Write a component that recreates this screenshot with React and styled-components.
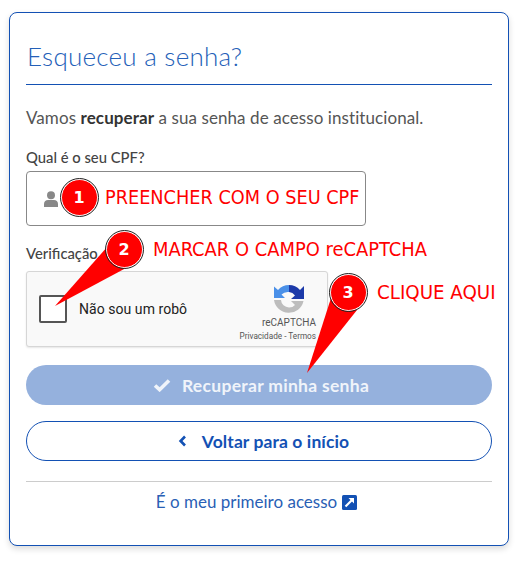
import React from "react";
import styled, { createGlobalStyle } from "styled-components";

const Global = createGlobalStyle`
  html, body { margin: 0; padding: 0; background: #fff; }
  body { font-family: "Lato", "Open Sans", sans-serif; color: #333; }
`;
const Page = styled.div`
  position: relative;
  width: 520px;
  height: 561px;
  padding: 12px 11px 0 9px;
  box-sizing: border-box;
  overflow: hidden;
`;
const Card = styled.main`
  box-sizing: border-box;
  height: 534px;
  border: 1px solid #1351b4;
  border-radius: 8px;
  padding: 26px 16px 0;
  background: #fff;
  box-shadow: 0 3px 6px rgba(0,0,0,.14);
  display: flex;
  flex-direction: column;
`;
const Title = styled.h1`
  margin: 0;
  height: 45px;
  line-height: 34px;
  padding-left: 1px;
  font-size: 26px;
  font-weight: 300;
  letter-spacing: .25px;
  color: #2460b8;
  border-bottom: 1px solid #1351b4;
`;
const Intro = styled.p`
  margin: 21px 0 0;
  font-size: 17px;
  line-height: 24px;
  font-weight: 400;
  color: #555;
  letter-spacing: .08px;
  b { font-weight: 700; color: #333; }
`;
const Label = styled.label`
  display: block;
  font-size: 14.8px;
  font-weight: 500;
  line-height: 20px;
  color: #444;
  margin-top: ${p => p.$top}px;
`;
const Field = styled.div`
  box-sizing: border-box;
  width: 340px;
  height: 55px;
  margin-top: 4px;
  border: 1px solid #888;
  border-radius: 4px;
  display: flex;
  align-items: center;
  padding-left: 16px;
`;
const Captcha = styled.div`
  box-sizing: border-box;
  width: 302px;
  height: 76px;
  margin-top: 8px;
  border: 1px solid #d6d6d6;
  border-radius: 3px;
  background: #f9f9f9;
  box-shadow: 0 1px 2px rgba(0,0,0,.1);
  display: flex;
  align-items: center;
  padding-left: 12px;
  position: relative;
`;
const Box = styled.span`
  box-sizing: border-box;
  width: 28px;
  height: 28px;
  border: 2px solid #555;
  border-radius: 2px;
  background: #fff;
`;
const Robot = styled.span`
  margin-left: 12px;
  font-family: "Roboto", sans-serif;
  font-size: 14px;
  color: #222;
  letter-spacing: .05px;
`;
const Brand = styled.div`
  margin-left: auto;
  margin-right: 11px;
  display: flex;
  flex-direction: column;
  align-items: flex-end;
  font-family: "Roboto", sans-serif;
  color: #555;
  padding-top: 9px;
`;
const LogoSlot = styled.span`
  display: block;
  height: 30px;
  margin-right: 12px;
`;
const BrandName = styled.span`
  font-size: 10px;
  line-height: 12px;
  margin-top: 2px;
`;
const BrandLinks = styled.span`
  font-size: 8.2px;
  line-height: 12px;
  white-space: nowrap;
  margin-top: 1px;
`;
const Button = styled.div`
  box-sizing: border-box;
  height: 40px;
  border-radius: 20px;
  margin-top: ${p => p.$top}px;
  padding-left: ${p => p.$shift}px;
  display: flex;
  align-items: center;
  justify-content: center;
  gap: ${p => p.$gap}px;
  font-size: 17.5px;
  letter-spacing: ${p => p.$track}px;
  font-weight: 700;
  background: ${p => (p.$solid ? "#95b1dd" : "#fff")};
  color: ${p => (p.$solid ? "#f0f4fa" : "#1351b4")};
  border: ${p => (p.$solid ? "none" : "1px solid #1351b4")};
`;
const Divider = styled.hr`
  width: 100%;
  margin: 20px 0 0;
  border: 0;
  border-top: 1px solid #ccc;
`;
const FirstAccess = styled.a`
  margin-top: 10px;
  padding-right: 5px;
  display: flex;
  align-items: center;
  justify-content: center;
  gap: 5px;
  font-size: 17px;
  line-height: 20px;
  color: #2a5fb5;
`;
const Bubble = styled.span`
  position: absolute;
  left: ${p => p.$x - 18.5}px;
  top: ${p => p.$y - 18.5}px;
  box-sizing: border-box;
  width: 37px;
  height: 37px;
  border-radius: 50%;
  background: #f00;
  border: 1.5px solid #fff;
  outline: 1px solid #222;
  display: flex;
  align-items: center;
  justify-content: center;
  color: #fff;
  font-family: "DejaVu Sans", sans-serif;
  font-weight: 700;
  font-size: 16px;
`;
const Note = styled.span`
  position: absolute;
  left: ${p => p.$x}px;
  top: ${p => p.$y}px;
  font-family: "DejaVu Sans Condensed", "DejaVu Sans", sans-serif;
  font-size: ${p => p.$size}px;
  line-height: 24px;
  color: #f00;
  white-space: nowrap;
`;
const Pointers = styled.svg`
  position: absolute;
  left: 0;
  top: 0;
`;

const UserIcon = () => (
  <svg width="16" height="16" viewBox="0 0 16 16" fill="#888">
    <circle cx="8" cy="4.2" r="4" />
    <path d="M1 16v-3c0-2.4 1.8-4 4-4h6c2.2 0 4 1.6 4 4v3z" />
  </svg>
);
const Check = () => (
  <svg width="18" height="14" viewBox="0 0 18 14">
    <path d="M2 7.5l4.6 4.2L16 2.5" fill="none" stroke="#f0f4fa" strokeWidth="3.6" />
  </svg>
);
const Chevron = () => (
  <svg width="9" height="12" viewBox="0 0 9 12">
    <path d="M7 1.5L2.6 6 7 10.5" fill="none" stroke="#1351b4" strokeWidth="2.6" />
  </svg>
);
const External = () => (
  <svg width="15" height="15" viewBox="0 0 15 15">
    <rect width="15" height="15" rx="1.5" fill="#1351b4" />
    <path d="M3.5 11.5L10 5" stroke="#fff" strokeWidth="2.2" />
    <path d="M6.5 3h5.5v5.5z" fill="#fff" />
  </svg>
);
const RecaptchaLogo = () => (
  <svg width="30" height="30" viewBox="0 0 30 30">
    <path d="M15 0A15 15 0 0 0 4 5L0 1.5V13H11L7.5 9.5A9 9 0 0 1 15 7z" fill="#4a90e8" />
    <path d="M15 0V7A8 8 0 0 1 21 10.5L17 14H30V1L26 5A15 15 0 0 0 15 0z" fill="#1c3aa9" />
    <path d="M0 15H7A8 8 0 0 0 15 22.5A8 8 0 0 0 21 20L17 16H29.5A15 15 0 0 1 0 15z" fill="#bdbdbd" />
  </svg>
);

export default function App() {
  return (
    <Page>
      <Global />
      <Card>
        <Title>Esqueceu a senha?</Title>
        <Intro>Vamos <b>recuperar</b> a sua senha de acesso institucional.</Intro>
        <Label $top={17}>Qual é o seu CPF?</Label>
        <Field><UserIcon /></Field>
        <Label $top={17}>Verificação</Label>
        <Captcha>
          <Box />
          <Robot>Não sou um robô</Robot>
          <Brand>
            <LogoSlot><RecaptchaLogo /></LogoSlot>
            <BrandName>reCAPTCHA</BrandName>
            <BrandLinks>Privacidade - Termos</BrandLinks>
          </Brand>
        </Captcha>
        <Button $solid $top={18} $gap={11} $track={0.3} $shift={4}><Check />Recuperar minha senha</Button>
        <Button $top={16} $gap={15} $track={0.1} $shift={9}><Chevron />Voltar para o início</Button>
        <Divider />
        <FirstAccess>É o meu primeiro acesso <External /></FirstAccess>
      </Card>
      <Pointers width="520" height="561" viewBox="0 0 520 561">
        <path d="M55 306L108 246L126 268z" fill="#f00" />
        <path d="M307 373L331 298L357 310z" fill="#f00" />
      </Pointers>
      <Bubble $x={79} $y={197}>1</Bubble>
      <Bubble $x={124} $y={249}>2</Bubble>
      <Bubble $x={348} $y={292}>3</Bubble>
      <Note $x={105} $y={186} $size={19.7}>PREENCHER COM O SEU CPF</Note>
      <Note $x={153} $y={238} $size={19.9}>MARCAR O CAMPO reCAPTCHA</Note>
      <Note $x={377} $y={280} $size={20.3}>CLIQUE AQUI</Note>
    </Page>
  );
}
